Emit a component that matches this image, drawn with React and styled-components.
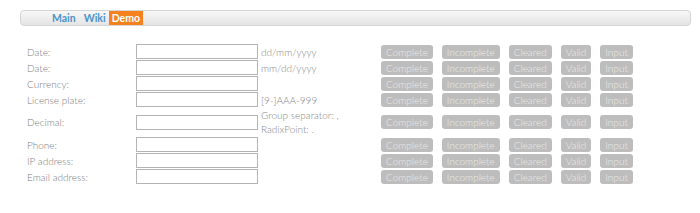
import React from "react";
import styled, { createGlobalStyle } from "styled-components";

const GlobalStyle = createGlobalStyle`
  body {
    margin: 0;
    background: #ffffff;
    font-family: Lato, "Open Sans", Arial, sans-serif;
  }
`;

const fields = [
  { label: "Date:", hint: ["dd/mm/yyyy"] },
  { label: "Date:", hint: ["mm/dd/yyyy"] },
  { label: "Currency:", hint: [] },
  { label: "License plate:", hint: ["[9-]AAA-999"] },
  { label: "Decimal:", hint: ["Group separator: ,", "RadixPoint: ."] },
  { label: "Phone:", hint: [] },
  { label: "IP address:", hint: [] },
  { label: "Email address:", hint: [] },
];

const states = ["Complete", "Incomplete", "Cleared", "Valid", "Input"];

const App = () => {
  return (
    <>
      <GlobalStyle />
      <Page>
        <NavBar>
          <NavLink href="#">Main</NavLink>
          <NavLink href="#">Wiki</NavLink>
          <NavLink href="#" active>
            Demo
          </NavLink>
        </NavBar>
        <Form>
          {fields.map((f, i) => (
            <React.Fragment key={i}>
              <Label>{f.label}</Label>
              <Cell>
                <Input type="text" />
              </Cell>
              <Hint>
                {f.hint.map((h) => (
                  <div key={h}>{h}</div>
                ))}
              </Hint>
              <Buttons>
                {states.map((s) => (
                  <StateButton key={s}>{s}</StateButton>
                ))}
              </Buttons>
            </React.Fragment>
          ))}
        </Form>
      </Page>
    </>
  );
};

const Page = styled.div`
  padding: 10px 9px 0 20px;
`;

const NavBar = styled.div`
  display: flex;
  align-items: center;
  gap: 8px;
  height: 16px;
  padding-left: 31px;
  box-sizing: border-box;
  border: 1px solid #d6d6d6;
  border-radius: 4px;
  background: linear-gradient(#f7f7f7, #e4e4e4);
  overflow: hidden;
`;

const NavLink = styled.a`
  display: flex;
  align-items: center;
  height: 15px;
  padding: 0 ${(p) => (p.active ? "3px" : "0")};
  margin-left: ${(p) => (p.active ? "-5px" : "0")};
  font-size: 10.5px;
  font-weight: 700;
  text-decoration: none;
  color: ${(p) => (p.active ? "#ffffff" : "#4b93c9")};
  background: ${(p) => (p.active ? "#f5821f" : "transparent")};
`;

const Form = styled.div`
  display: grid;
  grid-template-columns: 109px 125px 120px auto;
  row-gap: 1px;
  margin-top: 18px;
  padding-left: 7px;
  align-items: center;
`;

const Label = styled.div`
  font-size: 10px;
  font-weight: 300;
  color: #7c7c7c;
`;

const Cell = styled.div`
  display: flex;
`;

const Input = styled.input`
  width: 122px;
  height: 15px;
  box-sizing: border-box;
  border: 1px solid #b4b4b4;
  padding: 0 2px;
  margin: 0;
  font-size: 10px;
`;

const Hint = styled.div`
  font-size: 10px;
  font-weight: 300;
  line-height: 14px;
  color: #868686;
`;

const Buttons = styled.div`
  display: flex;
  gap: 9px;
`;

const StateButton = styled.span`
  display: flex;
  align-items: center;
  height: 14px;
  padding: 0 5px;
  border-radius: 3px;
  background: #bdbdbd;
  color: #ebebeb;
  font-size: 10px;
  font-weight: 300;
`;

export default App;
